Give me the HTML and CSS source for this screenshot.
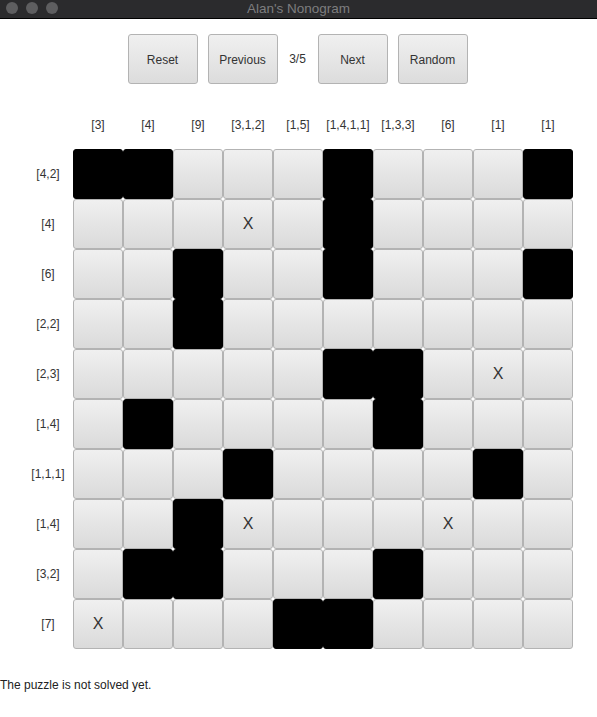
FILE: index.html
```html
<!DOCTYPE html>
<html>
<head>
<meta charset="utf-8">
<title>Alan's Nonogram</title>
<link rel="stylesheet" href="styles.css">
</head>
<body>
<div class="titlebar">
  <div class="lights"><span class="light"></span><span class="light"></span><span class="light"></span></div>
  <div class="title">Alan's Nonogram</div>
</div>
<div class="toolbar">
  <button class="btn">Reset</button>
  <button class="btn">Previous</button>
  <span class="count">3/5</span>
  <button class="btn">Next</button>
  <button class="btn">Random</button>
</div>
<div class="board" id="board"></div>
<div class="status">The puzzle is not solved yet.</div>
<script src="app.js"></script>
</body>
</html>
```

FILE: app.js
```js
var cols = ["[3]","[4]","[9]","[3,1,2]","[1,5]","[1,4,1,1]","[1,3,3]","[6]","[1]","[1]"];
var rows = ["[4,2]","[4]","[6]","[2,2]","[2,3]","[1,4]","[1,1,1]","[1,4]","[3,2]","[7]"];
var grid = [
  "BB...B...B",
  "...X.B....",
  "..B..B...B",
  "..B.......",
  ".....BB.X.",
  ".B....B...",
  "...B....B.",
  "..BX...X..",
  ".BB...B...",
  "X...BB...."
];
var b = document.getElementById("board");
function add(cls, txt) {
  var d = document.createElement("div");
  d.className = cls;
  if (txt) d.textContent = txt;
  b.appendChild(d);
}
add("corner", "");
cols.forEach(function (c) { add("colhead", c); });
for (var r = 0; r < 10; r++) {
  add("rowhead", rows[r]);
  for (var c = 0; c < 10; c++) {
    var ch = grid[r][c];
    if (ch === "B") add("cell filled", "");
    else if (ch === "X") add("cell", "X");
    else add("cell", "");
  }
}
```

FILE: styles.css
```css
html, body {
  margin: 0;
  padding: 0;
  background: #ffffff;
  width: 597px;
  height: 717px;
  overflow: hidden;
  font-family: "Liberation Sans", Arial, sans-serif;
  color: #333333;
}
.titlebar {
  position: relative;
  height: 18px;
  background: #2b2b2d;
  border-bottom: 1px solid #000;
}
.lights {
  display: flex;
  gap: 8px;
  padding: 2px 0 0 6px;
}
.light {
  width: 12px;
  height: 12px;
  border-radius: 50%;
  background: #5e5e60;
}
.title {
  position: absolute;
  left: 0;
  right: 0;
  top: 1px;
  text-align: center;
  font-size: 13.5px;
  line-height: 15px;
  color: #7d7d7f;
}
.toolbar {
  display: flex;
  justify-content: center;
  align-items: center;
  gap: 10px;
  margin-top: 15px;
  padding-right: 2px;
}
.btn {
  width: 70px;
  height: 50px;
  padding: 2px 0 0 0;
  border: 1px solid #b3b3b3;
  border-radius: 3px;
  background: linear-gradient(#f0f0f0, #dcdcdc);
  font-family: inherit;
  font-size: 12px;
  color: #333;
}
.count {
  font-size: 12px;
  width: 20px;
  text-align: center;
}
.board {
  display: grid;
  grid-template-columns: repeat(11, 50px);
  grid-template-rows: repeat(11, 50px);
  margin: 15px 0 0 23px;
  width: 550px;
}
.colhead, .rowhead {
  display: flex;
  align-items: center;
  justify-content: center;
  font-size: 12px;
  color: #333;
}
.colhead { padding-top: 2px; }
.cell {
  box-sizing: border-box;
  border: 1px solid #b3b3b3;
  border-radius: 3px;
  background: linear-gradient(#f0f0f0, #dadada);
  display: flex;
  align-items: center;
  justify-content: center;
  font-size: 16px;
  color: #333;
}
.cell.filled {
  background: #000;
  border-color: #000;
}
.status {
  margin-top: 29px;
  font-size: 12px;
  color: #222;
}
```
